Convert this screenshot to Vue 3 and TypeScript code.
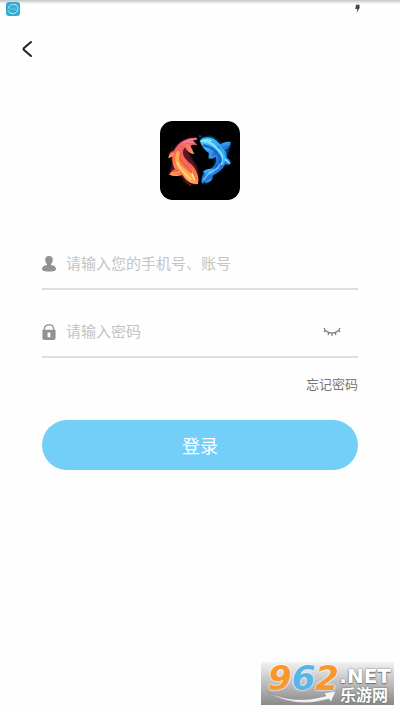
<script setup lang="ts">
import { ref } from 'vue'

const account = ref('')
const password = ref('')
const showPassword = ref(false)

function goBack(): void {
  window.history.back()
}
</script>

<template>
  <main class="page">
    <div class="status">
      <svg class="status-app" viewBox="0 0 42 42" aria-hidden="true">
        <rect width="42" height="42" rx="9" fill="#36a9d1" />
        <g fill="none" stroke="#b9edfb" stroke-width="3" stroke-linecap="round">
          <path d="M7 19C9 6 27 3 34 12" />
          <path d="M35 18C38 33 20 39 11 32" />
          <path d="M6 25q2 6 7 8M28 7q7 3 8 10" stroke-width="2" />
          <path d="M13 18v5h5v-5M22 18v5h6v-5" stroke="#78cee8" stroke-width="2" />
        </g>
      </svg>
      <svg class="status-bolt" viewBox="0 0 15 27" aria-hidden="true">
        <path d="M3 2h11l-1 8h2L5 26l2-11H1z" fill="#444" />
      </svg>
    </div>

    <header class="nav">
      <button class="back" type="button" aria-label="返回" @click="goBack">
        <svg viewBox="0 0 12 18" aria-hidden="true">
          <path d="M10 2L3 8Q2 9 3 10L10 16" fill="none" stroke="#222" stroke-width="2" stroke-linecap="round" />
        </svg>
      </button>
    </header>

    <svg class="logo" viewBox="28 28 240 237" aria-hidden="true">
      <defs>
        <linearGradient id="fire" x1="0.8" y1="0" x2="0.5" y2="1">
          <stop offset="0" stop-color="#c8567c" />
          <stop offset="0.35" stop-color="#f06468" />
          <stop offset="0.7" stop-color="#ff7440" />
          <stop offset="1" stop-color="#ffbc62" />
        </linearGradient>
        <linearGradient id="water" x1="0.2" y1="0" x2="0.5" y2="1">
          <stop offset="0" stop-color="#52c9f4" />
          <stop offset="0.4" stop-color="#2597ea" />
          <stop offset="0.7" stop-color="#2868d6" />
          <stop offset="1" stop-color="#3ea9ed" />
        </linearGradient>
        <filter id="glow" x="-20%" y="-20%" width="140%" height="140%">
          <feGaussianBlur stdDeviation="3" />
        </filter>
        <filter id="paint" x="-20%" y="-20%" width="140%" height="140%">
          <feGaussianBlur stdDeviation="2" />
        </filter>
      </defs>
      <rect x="28" y="28" width="240" height="237" rx="38" fill="#000" />
      <path d="M140 78Q95 77 72 109L54 125l11 27-9 38 33 1 17 24 36 4-1-49-25-41-5-24z" fill="#9c2740" opacity="0.6" filter="url(#glow)" />
      <g fill="url(#fire)">
        <path d="M141 79C108 73 75 94 67 128C59 158 74 181 96 191C108 212 129 220 142 216C147 196 137 172 121 157C103 142 93 130 98 114Q111 93 141 79Z" />
        <path d="M88 98Q97 83 118 84Q133 88 140 101Q126 96 120 103L131 128Q112 125 103 107Z" />
        <path d="M73 117Q56 117 53 140Q65 131 75 139Z" />
        <path d="M78 172Q65 172 56 189Q78 198 102 188Z" />
        <path d="M108 150Q124 153 129 184Q112 176 105 163Z" />
      </g>
      <g fill="none" stroke-linecap="round" filter="url(#paint)">
        <path d="M82 124Q73 151 91 168T126 199" stroke="#ffac50" stroke-width="11" />
        <path d="M92 122Q83 142 101 158T136 204" stroke="#e95750" stroke-width="4" />
        <path d="M80 153Q88 177 119 202" stroke="#ffd478" stroke-width="6" />
        <path d="M99 93Q117 83 137 82M108 99l14 16M103 90l25 2" stroke="#f38b94" stroke-width="4" />
        <path d="M61 184q20 2 31-7M58 131l12-6" stroke="#ff9d4b" stroke-width="4" />
        <path d="M124 186l8 18" stroke="#ffe1a0" stroke-width="5" />
      </g>
      <path d="M147 77l38-3 28 22 26-5-4 26-7 20 12 17-17 6-36 32-17 24-16-1 3-31 34-21 4-28-31-26z" fill="#0757a0" opacity="0.8" filter="url(#glow)" />
      <g fill="url(#water)">
        <path d="M147 87C163 70 190 74 204 95C231 110 237 145 217 168C204 184 186 190 174 198L154 216C149 196 160 182 178 173C197 162 201 145 193 132C180 128 156 116 147 87Z" />
        <path d="M193 99Q205 104 215 95Q228 88 240 91Q240 112 222 112Q206 120 199 107Z" />
        <path d="M167 107Q178 115 173 140Q191 144 197 130L199 119Z" />
        <path d="M222 137Q243 143 239 158Q226 159 217 154Z" />
        <path d="M157 180Q165 170 191 171L185 201Q177 215 162 212Q171 193 157 180Z" />
      </g>
      <g fill="none" stroke-linecap="round" filter="url(#paint)">
        <path d="M154 88Q181 87 204 116T213 156" stroke="#79e1fa" stroke-width="7" />
        <path d="M160 101Q190 108 203 130T195 168" stroke="#1b60cb" stroke-width="7" />
        <path d="M163 82Q194 81 211 109T217 157" stroke="#36b3f2" stroke-width="6" />
        <path d="M208 158Q197 177 177 181L160 204M203 168l-27 18" stroke="#68c8fa" stroke-width="4" />
        <path d="M210 104q12 1 23-7M179 117l-2 18M184 118l-3 19" stroke="#359fe8" stroke-width="4" />
        <path d="M158 87q12-5 23 0M224 144l10 8" stroke="#a5f1ff" stroke-width="4" />
      </g>
      <g fill="#ee5b35">
        <circle cx="62" cy="107" r="1" /><circle cx="67" cy="101" r="1" />
        <circle cx="110" cy="216" r="1" /><circle cx="118" cy="220" r="2" />
        <circle cx="100" cy="209" r="1" /><circle cx="148" cy="73" r="2" fill="#279bd6" />
      </g>
    </svg>

    <form class="form" @submit.prevent>
      <div class="field">
        <label for="account" aria-label="账号">
          <svg viewBox="0 0 14 16" aria-hidden="true">
            <path d="M7 0C4.500 0 3 1.500 3.200 4C3.300 6 4 7 5 8V9C2 9.500 0 10.500 0 13C0 15 3 15.500 7 15.500S14 15 14 13C14 10.500 12 9.500 9 9V8C10 7 10.700 6 10.800 4C11 1.500 9.500 0 7 0Z" fill="#929292" />
          </svg>
        </label>
        <input id="account" v-model="account" type="text" placeholder="请输入您的手机号、账号" autocomplete="username" />
      </div>

      <div class="field">
        <label for="password" aria-label="密码">
          <svg viewBox="0 0 14 17" aria-hidden="true">
            <path d="M2 7V5Q2.500 1 7 1T12 5V7" fill="none" stroke="#929292" stroke-width="1.400" />
            <path fill-rule="evenodd" d="M1 6H13Q14 6 14 7V15Q14 17 12 17H2Q0 17 0 15V7Q0 6 1 6ZM5.500 9V14H8.500V9Z" fill="#929292" />
          </svg>
        </label>
        <input id="password" v-model="password" :type="showPassword ? 'text' : 'password'" placeholder="请输入密码" autocomplete="current-password" />
        <button class="eye" type="button" aria-label="显示密码" :aria-pressed="showPassword" @click="showPassword = !showPassword">
          <svg viewBox="0 0 18 9" aria-hidden="true">
            <path d="M1 0Q3 5 9 5T17 0M2.500 2L1 4M6 4L5 7M9 5V8M12 4L13 7M15.500 2L17 4" fill="none" stroke="#777" stroke-width="1.200" />
          </svg>
        </button>
      </div>

      <a class="forgot" href="#forgot">忘记密码</a>
      <button class="submit" type="submit">登录</button>
    </form>

    <aside class="mark">
      <svg class="swoosh" viewBox="0 0 70 14" aria-hidden="true">
        <path d="M0 1Q27 14 59 5L57 2L69 0L64 11L62 8Q28 18 0 1Z" fill="#f4f4f4" stroke="#888" stroke-width="0.500" />
      </svg>
      <span class="digits"><span class="orange">9</span><span class="blue">6</span><span class="orange">2</span></span>
      <span class="net">.NET</span>
      <span class="site">乐游网</span>
    </aside>
  </main>
</template>

<style>
body {
  background: #fefefe;
}
</style>

<style scoped>
.page {
  position: relative;
  box-sizing: border-box;
  min-height: 100vh;
  display: flex;
  flex-direction: column;
  background: #fefefe;
  font-family: "Liberation Sans", "Noto Sans CJK SC", sans-serif;
}

button {
  padding: 0;
  border: 0;
  background: none;
  font: inherit;
  cursor: pointer;
}

svg {
  display: block;
}

.status {
  display: flex;
  justify-content: space-between;
  padding: 2px 40px 0 6px;
  height: 18px;
  background: linear-gradient(#c4c4c4, #fefefe 4px);
}

.status-app {
  width: 14px;
  height: 14px;
}

.status-bolt {
  width: 5px;
  height: 9px;
  margin-top: 2px;
}

.nav {
  display: flex;
  padding: 11px;
}

.back {
  display: grid;
  place-items: center;
  width: 32px;
  height: 36px;
}

.back svg {
  width: 12px;
  height: 18px;
}

.logo {
  align-self: center;
  width: 80px;
  height: 79px;
  margin-top: 43px;
}

.form {
  display: flex;
  flex-direction: column;
  padding: 40px 42px 0;
}

.field {
  display: flex;
  align-items: center;
  height: 48px;
  border-bottom: 2px solid #dedede;
}

.field + .field {
  margin-top: 18px;
}

.field label {
  width: 14px;
  margin-right: 10px;
}

.field label svg {
  width: 14px;
  height: 16px;
}

.field input {
  flex: 1;
  min-width: 0;
  padding: 0;
  border: 0;
  outline: 0;
  background: transparent;
  color: #333;
  font: inherit;
  font-size: 15px;
  line-height: 24px;
}

.field input::placeholder {
  color: #c4c4c4;
  opacity: 1;
}

.eye {
  padding: 8px 16px;
}

.eye svg {
  width: 20px;
  height: 9px;
}

.forgot {
  align-self: flex-end;
  margin-top: 17px;
  color: #777;
  font-size: 13px;
  line-height: 20px;
  text-decoration: none;
}

.submit {
  height: 50px;
  margin-top: 25px;
  border-radius: 25px;
  background: #73cef8;
  color: #fff;
  font-size: 18px;
}

.mark {
  position: absolute;
  right: 6px;
  bottom: 6px;
  width: 133px;
  height: 43px;
  background: linear-gradient(#f2f2f2, #898989);
  color: #fff;
  font-weight: bold;
  white-space: nowrap;
}

.mark > * {
  position: absolute;
}

.digits {
  left: 7px;
  top: 0;
  font-family: "DejaVu Sans", sans-serif;
  font-size: 34px;
  font-style: italic;
  line-height: 32px;
  text-shadow: 0 0 2px #fff, 0 0 2px #fff;
}

.orange {
  color: #f8982c;
}

.blue {
  color: #58b5e8;
}

.net {
  right: 3px;
  top: 4px;
  font-family: "DejaVu Sans", sans-serif;
  font-size: 20px;
  line-height: 20px;
  text-shadow: 0 0 2px #666, 0 1px 1px #777;
}

.site {
  right: 6px;
  bottom: 0;
  font-size: 16px;
  line-height: 18px;
  text-shadow: 0 0 2px #555;
}

.swoosh {
  left: 6px;
  bottom: 0;
  width: 70px;
  height: 14px;
}
</style>
